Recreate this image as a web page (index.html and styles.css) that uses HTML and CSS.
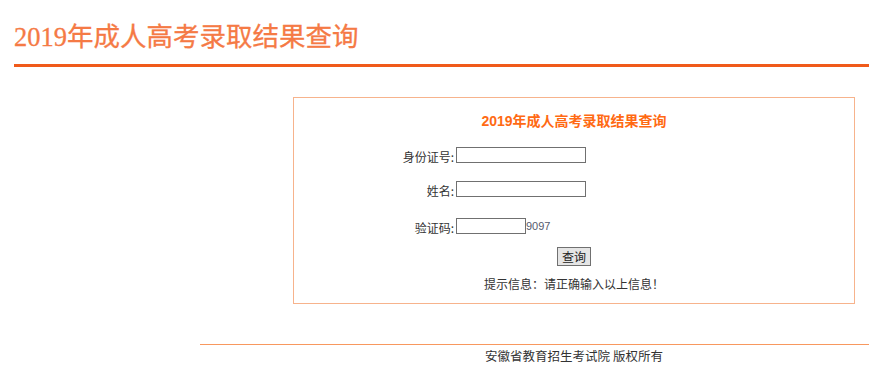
FILE: index.html
```html
<!DOCTYPE html>
<html lang="zh-CN">
<head>
<meta charset="utf-8">
<title>2019年成人高考录取结果查询</title>
<link rel="stylesheet" href="styles.css">
</head>
<body>
<header class="header">
  <h1 class="title">2019年成人高考录取结果查询</h1>
  <div class="title-rule"></div>
</header>
<main class="panel">
  <h2 class="panel-title">2019年成人高考录取结果查询</h2>
  <form class="form">
    <div class="row row-first">
      <label class="label">身份证号:</label>
      <input class="field" type="text">
    </div>
    <div class="row">
      <label class="label">姓名:</label>
      <input class="field" type="text">
    </div>
    <div class="row row-code">
      <label class="label">验证码:</label>
      <input class="field field-short" type="text"><span class="code">9097</span>
    </div>
    <div class="actions">
      <button class="btn" type="button">查询</button>
    </div>
    <p class="hint">提示信息：请正确输入以上信息！</p>
  </form>
</main>
<footer class="footer">
  <div class="footer-rule"></div>
  <p class="copyright">安徽省教育招生考试院 版权所有</p>
</footer>
</body>
</html>
```

FILE: styles.css
```css
html, body {
  margin: 0;
  padding: 0;
  background: #ffffff;
}
body {
  width: 869px;
  font-family: "Noto Sans CJK SC", sans-serif;
  font-size: 12px;
  color: #333333;
}
.header {
  padding: 22px 0 0 14px;
}
.title {
  margin: 0;
  font-family: "Liberation Serif", "Noto Sans CJK SC", serif;
  font-size: 26.5px;
  line-height: 30px;
  font-weight: normal;
  color: #f57a45;
  -webkit-text-stroke: 0.3px #f57a45;
}
.title-rule {
  margin-top: 12px;
  height: 3px;
  background: #f05a1a;
}
.panel {
  box-sizing: border-box;
  margin: 30px 0 0 293px;
  width: 562px;
  height: 207px;
  border: 1px solid #f7b38c;
  padding-top: 13px;
}
.panel-title {
  margin: 0;
  text-align: center;
  font-family: "Liberation Sans", "Noto Sans CJK SC", sans-serif;
  font-size: 14px;
  line-height: 20px;
  font-weight: bold;
  color: #ff6a13;
}
.form {
  margin: 0;
}
.row {
  display: flex;
  align-items: flex-start;
  height: 16px;
  margin-top: 18px;
}
.row-first {
  margin-top: 16px;
}
.row-code {
  margin-top: 21px;
}
.label {
  width: 160px;
  padding: 2px 2px 0 0;
  text-align: right;
  line-height: 16px;
  color: #333333;
}
.field {
  box-sizing: border-box;
  width: 130px;
  height: 16px;
  margin: 0;
  padding: 0 2px;
  border: 1px solid #707070;
  font-size: 12px;
  background: #ffffff;
}
.field-short {
  width: 70px;
}
.code {
  align-self: center;
  font-family: "Liberation Sans", Arial, sans-serif;
  font-size: 11px;
  color: #555a6e;
  line-height: 16px;
}
.actions {
  display: flex;
  justify-content: center;
  margin-top: 13px;
}
.btn {
  box-sizing: border-box;
  width: 34px;
  height: 19px;
  margin: 0;
  padding: 0;
  border: 1px solid #707070;
  background: #e5e5e5;
  font-family: "Noto Sans CJK SC", sans-serif;
  font-size: 12px;
  line-height: 16px;
  color: #222222;
}
.hint {
  margin: 10px 0 0;
  text-align: center;
  line-height: 16px;
  color: #333333;
}
.footer {
  margin-top: 40px;
}
.footer-rule {
  margin-left: 200px;
  height: 1px;
  background: #f8985f;
}
.copyright {
  margin: 3px 0 0 293px;
  width: 562px;
  text-align: center;
  font-size: 12.5px;
  line-height: 16px;
  color: #333333;
}
```
